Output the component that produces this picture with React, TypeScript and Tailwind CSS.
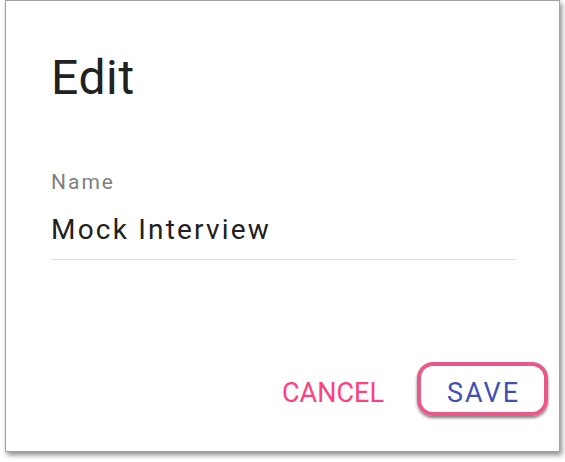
const App = () => {
  return (
    <div className="w-[565px] h-[462px] bg-white overflow-hidden" style={{ fontFamily: "Roboto, 'Liberation Sans', sans-serif" }}>
      {/* Dialog */}
      <div className="ml-[5px] w-[555px] h-[452px] flex flex-col bg-white border border-[#a3a3a3] shadow-[2px_3px_5px_rgba(0,0,0,0.45)]">
        <div className="pl-[45px] pr-[43px]">
          <h1 className="mt-[53px] text-[48px] leading-[48px] font-normal tracking-[0.6px] text-[#212121]">Edit</h1>

          <div className="mt-[70px]">
            <label className="block text-[21px] leading-[21px] tracking-[2px] text-[#808080]">Name</label>
            <div className="mt-[23px] pb-[15px] border-b border-[#e0e0e0] text-[28px] leading-[28px] tracking-[2.2px] text-[#212121]">
              Mock Interview
            </div>
          </div>
        </div>

        {/* Actions */}
        <div className="mt-auto pb-[35px] pr-[11px] flex justify-end items-start">
          <button className="mt-[18px] mr-[33px] text-[27px] leading-[27px] text-[#ff4081]">
            CANCEL
          </button>
          <button className="border-4 border-[#e95888] rounded-[16px] pl-[26px] pr-[24px] pt-[14px] pb-[5px] text-[27px] leading-[27px] tracking-[2px] text-[#3f51b5] shadow-[0_2px_3px_rgba(0,0,0,0.5)]">
            SAVE
          </button>
        </div>
      </div>
    </div>
  );
};

export default App;
